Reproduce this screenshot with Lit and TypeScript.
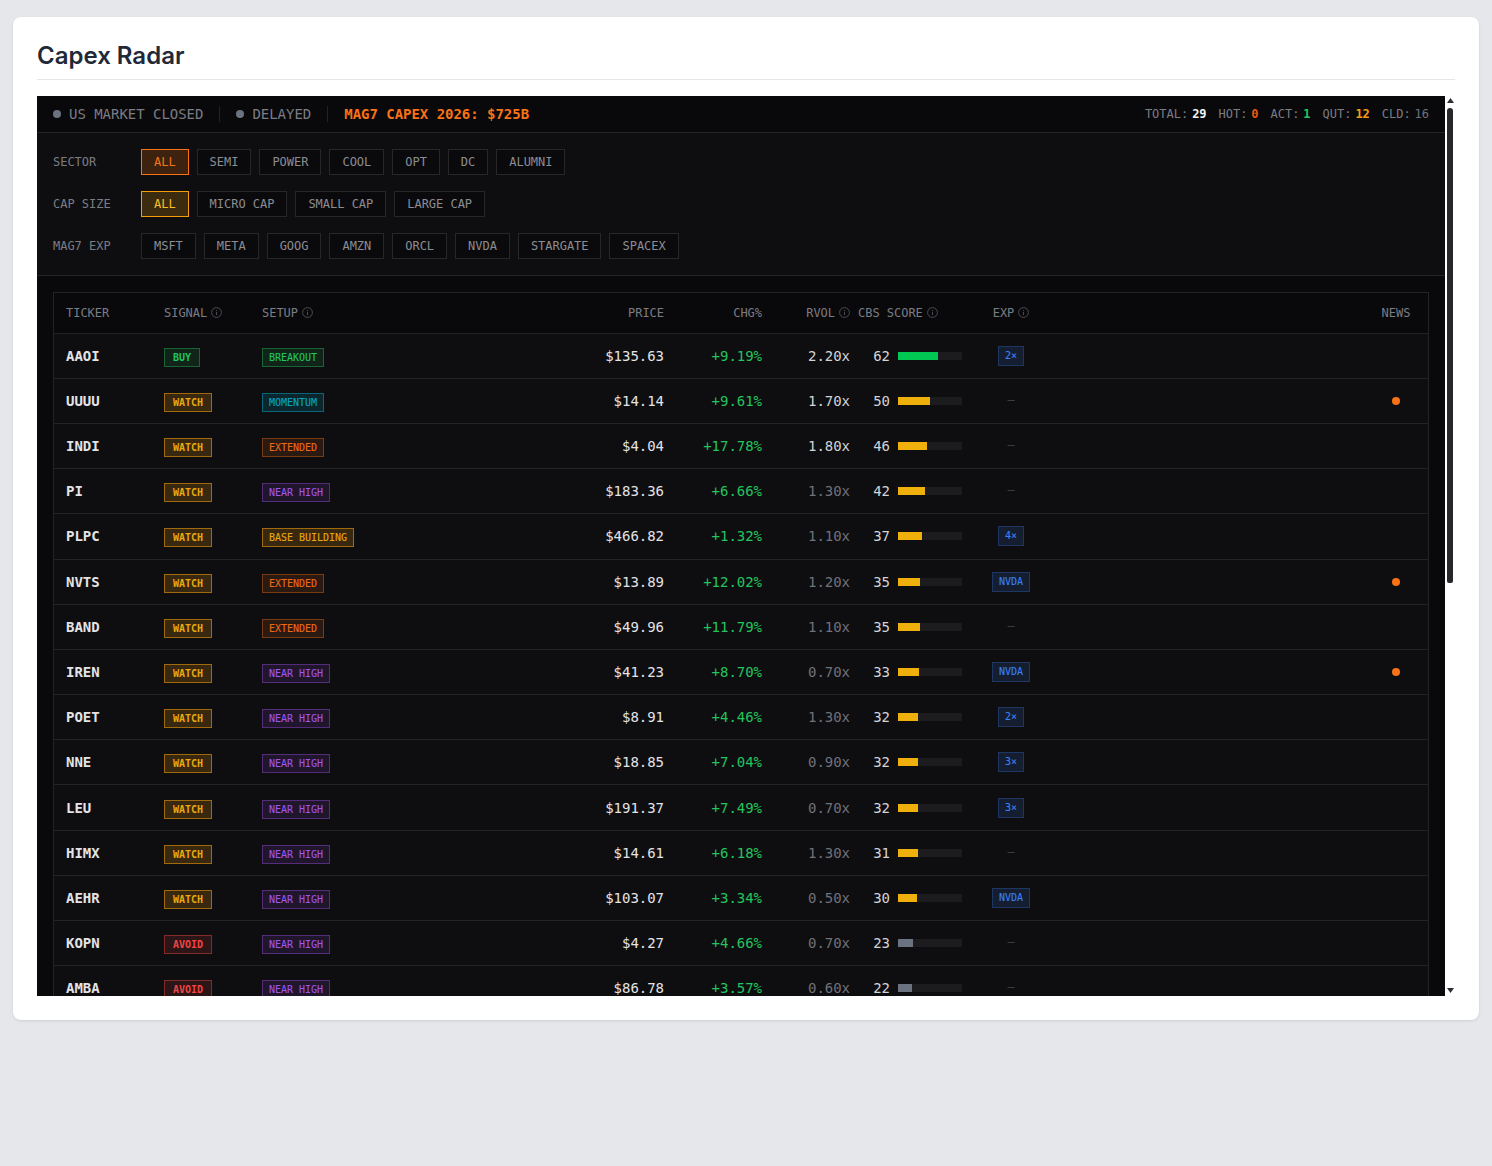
import { LitElement, html, css, svg } from "lit";
import { customElement } from "lit/decorators.js";

type Row = [string, string, string, string, string, number, number, string, boolean];

const ROWS: Row[] = [
  ["AAOI", "BUY", "BREAKOUT", "$135.63", "+9.19%", 2.2, 62, "2×", false],
  ["UUUU", "WATCH", "MOMENTUM", "$14.14", "+9.61%", 1.7, 50, "", true],
  ["INDI", "WATCH", "EXTENDED", "$4.04", "+17.78%", 1.8, 46, "", false],
  ["PI", "WATCH", "NEAR HIGH", "$183.36", "+6.66%", 1.3, 42, "", false],
  ["PLPC", "WATCH", "BASE BUILDING", "$466.82", "+1.32%", 1.1, 37, "4×", false],
  ["NVTS", "WATCH", "EXTENDED", "$13.89", "+12.02%", 1.2, 35, "NVDA", true],
  ["BAND", "WATCH", "EXTENDED", "$49.96", "+11.79%", 1.1, 35, "", false],
  ["IREN", "WATCH", "NEAR HIGH", "$41.23", "+8.70%", 0.7, 33, "NVDA", true],
  ["POET", "WATCH", "NEAR HIGH", "$8.91", "+4.46%", 1.3, 32, "2×", false],
  ["NNE", "WATCH", "NEAR HIGH", "$18.85", "+7.04%", 0.9, 32, "3×", false],
  ["LEU", "WATCH", "NEAR HIGH", "$191.37", "+7.49%", 0.7, 32, "3×", false],
  ["HIMX", "WATCH", "NEAR HIGH", "$14.61", "+6.18%", 1.3, 31, "", false],
  ["AEHR", "WATCH", "NEAR HIGH", "$103.07", "+3.34%", 0.5, 30, "NVDA", false],
  ["KOPN", "AVOID", "NEAR HIGH", "$4.27", "+4.66%", 0.7, 23, "", false],
  ["AMBA", "AVOID", "NEAR HIGH", "$86.78", "+3.57%", 0.6, 22, "", false],
];

const SETUP_CLASS: Record<string, string> = {
  BREAKOUT: "green",
  MOMENTUM: "cyan",
  EXTENDED: "orange",
  "NEAR HIGH": "purple",
  "BASE BUILDING": "amber",
};
const SIGNAL_CLASS: Record<string, string> = { BUY: "green", WATCH: "amber", AVOID: "red" };

const info = svg`<svg class="info" viewBox="0 0 11 11" width="11" height="11" fill="none" stroke="currentColor" stroke-width="0.9"><circle cx="5.5" cy="5.5" r="4.9"/><path d="M5.5 4.8v3.4M5.5 2.8v1"/></svg>`;

@customElement("app-root")
export class AppRoot extends LitElement {
  static styles = css`
    :host {
      display: block;
      min-height: 1166px;
      box-sizing: border-box;
      padding: 17px 13px 0;
      background: #e5e7eb;
      font-family: "DejaVu Sans Mono", "Liberation Mono", monospace;
    }
    * { letter-spacing: -0.002em; }
    .card {
      background: #fff;
      border-radius: 8px;
      padding: 24px;
      box-shadow: 0 1px 3px rgba(0, 0, 0, 0.1);
    }
    h1 {
      margin: 0 0 16px;
      height: 38px;
      font: 600 24px/30px Inter, sans-serif;
      letter-spacing: 0;
      color: #1f2937;
      border-bottom: 1px solid #e5e7eb;
    }
    .panel { display: flex; height: 900px; }
    .scroller { flex: 1; min-width: 0; overflow: hidden; background: #09090b; }
    .sb { flex: none; width: 10px; display: flex; flex-direction: column; align-items: center; }
    .sb svg { flex: none; fill: #2e2e32; }
    .sb .up { margin-top: 2px; }
    .sb .down { margin-top: auto; margin-bottom: 3px; }
    .thumb { flex: none; width: 6px; height: 475px; margin-top: 5px; background: #27272a; border-radius: 3px 3px 2px 2px; }
    .top {
      height: 37px;
      box-sizing: border-box;
      display: flex;
      align-items: center;
      gap: 16px;
      padding: 0 16px;
      border-bottom: 1px solid #232326;
      background: #09090b;
      font-size: 14px;
      color: #7c7c84;
    }
    .status { display: flex; align-items: center; gap: 8px; }
    .dot { width: 8px; height: 8px; border-radius: 50%; background: #6b7280; }
    .sep { width: 1px; height: 16px; background: #232326; }
    .capex { color: #f97316; font-weight: 700; }
    .stats { margin-left: auto; display: flex; gap: 12px; font-size: 12px; color: #7c7c84; }
    .stats span { display: flex; gap: 4px; }
    .stats b { font-weight: 700; }
    .white { color: #f4f4f5; }
    .s-hot { color: #ea580c; }
    .s-act { color: #22c55e; }
    .s-qut { color: #f59e0b; }
    .stats b.s-cld { color: #6b7280; font-weight: 400; }
    .filters {
      display: flex;
      flex-direction: column;
      gap: 16px;
      padding: 16px;
      background: #0e0e10;
      border-bottom: 1px solid #232326;
    }
    .frow { display: flex; align-items: center; }
    .flabel { width: 88px; font-size: 12px; color: #7c7c84; }
    .btns { display: flex; gap: 8px; }
    .btn {
      font: 12px/16px "DejaVu Sans Mono", "Liberation Mono", monospace;
      padding: 4px 12px;
      border: 1px solid #27272a;
      background: #0a0a0c;
      color: #8c8c93;
    }
    .btn.on-orange { border-color: #f97316; background: rgba(249, 115, 22, 0.2); color: #f97316; }
    .btn.on-amber { border-color: #f59e0b; background: rgba(245, 158, 11, 0.2); color: #fbbf24; }
    .body { padding: 16px; background: #09090b; }
    .table { border: 1px solid #232326; background: #0e0e10; }
    .cols {
      display: grid;
      grid-template-columns: 98px 98px 304px 98px 98px 88px 125px 72px 1fr 28px;
      align-items: center;
      padding: 0 18px 0 12px;
      box-sizing: border-box;
      border-bottom: 1px solid #232326;
    }
    .head { height: 40.6px; background: #09090b; font-size: 12px; color: #7c7c84; }
    .th { display: flex; align-items: center; gap: 4px; }
    .info { color: #52525b; flex: none; }
    .right { justify-content: flex-end; text-align: right; }
    .center { justify-content: center; text-align: center; }
    .pl { padding-left: 8px; }
    .row { height: 45.2px; font-size: 14px; color: #e4e4e7; }
    .tick { font-weight: 700; }
    .pos { color: #22c55e; }
    .dim { color: #71717a; }
    .bright { color: #d4d4d8; }
    .tag {
      display: inline-block;
      margin-top: 3px;
      font-size: 10px;
      line-height: 13px;
      padding: 2px 6px;
      border: 1px solid;
      -webkit-text-stroke: 0.1px currentColor;
    }
    .tag.sig { padding: 2px 8px; font-weight: 700; -webkit-text-stroke: 0; }
    .green { color: #22c55e; background: rgba(34, 197, 94, 0.12); border-color: rgba(34, 197, 94, 0.4); }
    .amber { color: #eaa80c; background: rgba(245, 158, 11, 0.18); border-color: rgba(245, 158, 11, 0.55); }
    .red { color: #ef4444; background: rgba(239, 68, 68, 0.13); border-color: rgba(239, 68, 68, 0.45); }
    .cyan { color: #06a5c8; background: rgba(6, 182, 212, 0.15); border-color: rgba(6, 182, 212, 0.45); }
    .orange { color: #ea6a16; background: rgba(249, 115, 22, 0.12); border-color: rgba(249, 115, 22, 0.38); }
    .purple { color: #a055ec; background: rgba(168, 85, 247, 0.12); border-color: rgba(168, 85, 247, 0.38); }
    .score { display: flex; align-items: center; gap: 8px; padding-left: 8px; }
    .num { width: 32px; text-align: right; color: #d4d4d8; }
    .bar { width: 64px; height: 8px; background: #1c1c1f; }
    .fill { height: 100%; }
    .fill.hi { background: #00c853; }
    .fill.mid { background: #f0b00c; }
    .fill.lo { background: #6b7280; }
    .exp { display: flex; justify-content: center; align-items: center; }
    .xtag {
      display: block;
      font-size: 10px;
      line-height: 14px;
      padding: 2px 6px;
      border: 1px solid rgba(59, 130, 246, 0.25);
      background: rgba(59, 130, 246, 0.14);
      color: #3b82f6;
      -webkit-text-stroke: 0.1px currentColor;
    }
    .none { display: block; color: #3f3f46; font-size: 12px; line-height: 12px; margin-top: -2px; }
    .news { display: flex; justify-content: center; }
    .ndot { width: 8px; height: 8px; border-radius: 50%; background: #f97316; }
  `;

  private filter(label: string, items: string[], active: string) {
    return html`<div class="frow">
      <div class="flabel">${label}</div>
      <div class="btns">
        ${items.map((b, i) => html`<div class="btn ${i === 0 ? active : ""}">${b}</div>`)}
      </div>
    </div>`;
  }

  private row(r: Row) {
    const [tick, sig, setup, price, chg, rvol, score, exp, news] = r;
    const lvl = score >= 60 ? "hi" : score >= 30 ? "mid" : "lo";
    return html`<div class="cols row">
      <div class="tick">${tick}</div>
      <div><span class="tag sig ${SIGNAL_CLASS[sig]}">${sig}</span></div>
      <div><span class="tag ${SETUP_CLASS[setup]}">${setup}</span></div>
      <div class="right">${price}</div>
      <div class="right pos">${chg}</div>
      <div class="right ${rvol >= 1.5 ? "bright" : "dim"}">${rvol.toFixed(2)}x</div>
      <div class="score">
        <span class="num">${score}</span>
        <div class="bar"><div class="fill ${lvl}" style="width:${score}%"></div></div>
      </div>
      <div class="exp">${exp ? html`<span class="xtag">${exp}</span>` : html`<span class="none">–</span>`}</div>
      <div></div>
      <div class="news">${news ? html`<div class="ndot"></div>` : ""}</div>
    </div>`;
  }

  render() {
    return html`<div class="card">
      <h1>Capex Radar</h1>
      <div class="panel">
        <div class="scroller">
          <div class="top">
            <div class="status"><i class="dot"></i>US MARKET CLOSED</div>
            <i class="sep"></i>
            <div class="status"><i class="dot"></i>DELAYED</div>
            <i class="sep"></i>
            <div class="capex">MAG7 CAPEX 2026: $725B</div>
            <div class="stats">
              <span>TOTAL:<b class="white">29</b></span>
              <span>HOT:<b class="s-hot">0</b></span>
              <span>ACT:<b class="s-act">1</b></span>
              <span>QUT:<b class="s-qut">12</b></span>
              <span>CLD:<b class="s-cld">16</b></span>
            </div>
          </div>
          <div class="filters">
            ${this.filter("SECTOR", ["ALL", "SEMI", "POWER", "COOL", "OPT", "DC", "ALUMNI"], "on-orange")}
            ${this.filter("CAP SIZE", ["ALL", "MICRO CAP", "SMALL CAP", "LARGE CAP"], "on-amber")}
            ${this.filter("MAG7 EXP", ["MSFT", "META", "GOOG", "AMZN", "ORCL", "NVDA", "STARGATE", "SPACEX"], "")}
          </div>
          <div class="body">
            <div class="table">
              <div class="cols head">
                <div class="th">TICKER</div>
                <div class="th">SIGNAL${info}</div>
                <div class="th">SETUP${info}</div>
                <div class="th right">PRICE</div>
                <div class="th right">CHG%</div>
                <div class="th right">RVOL${info}</div>
                <div class="th pl">CBS SCORE${info}</div>
                <div class="th center">EXP${info}</div>
                <div></div>
                <div class="th center">NEWS</div>
              </div>
              ${ROWS.map((r) => this.row(r))}
            </div>
          </div>
        </div>
        <div class="sb">
          <svg class="up" width="7" height="5" viewBox="0 0 7 5"><path d="M3.5 0L7 5H0z"/></svg>
          <div class="thumb"></div>
          <svg class="down" width="7" height="5" viewBox="0 0 7 5"><path d="M0 0H7L3.5 5z"/></svg>
        </div>
      </div>
    </div>`;
  }
}
